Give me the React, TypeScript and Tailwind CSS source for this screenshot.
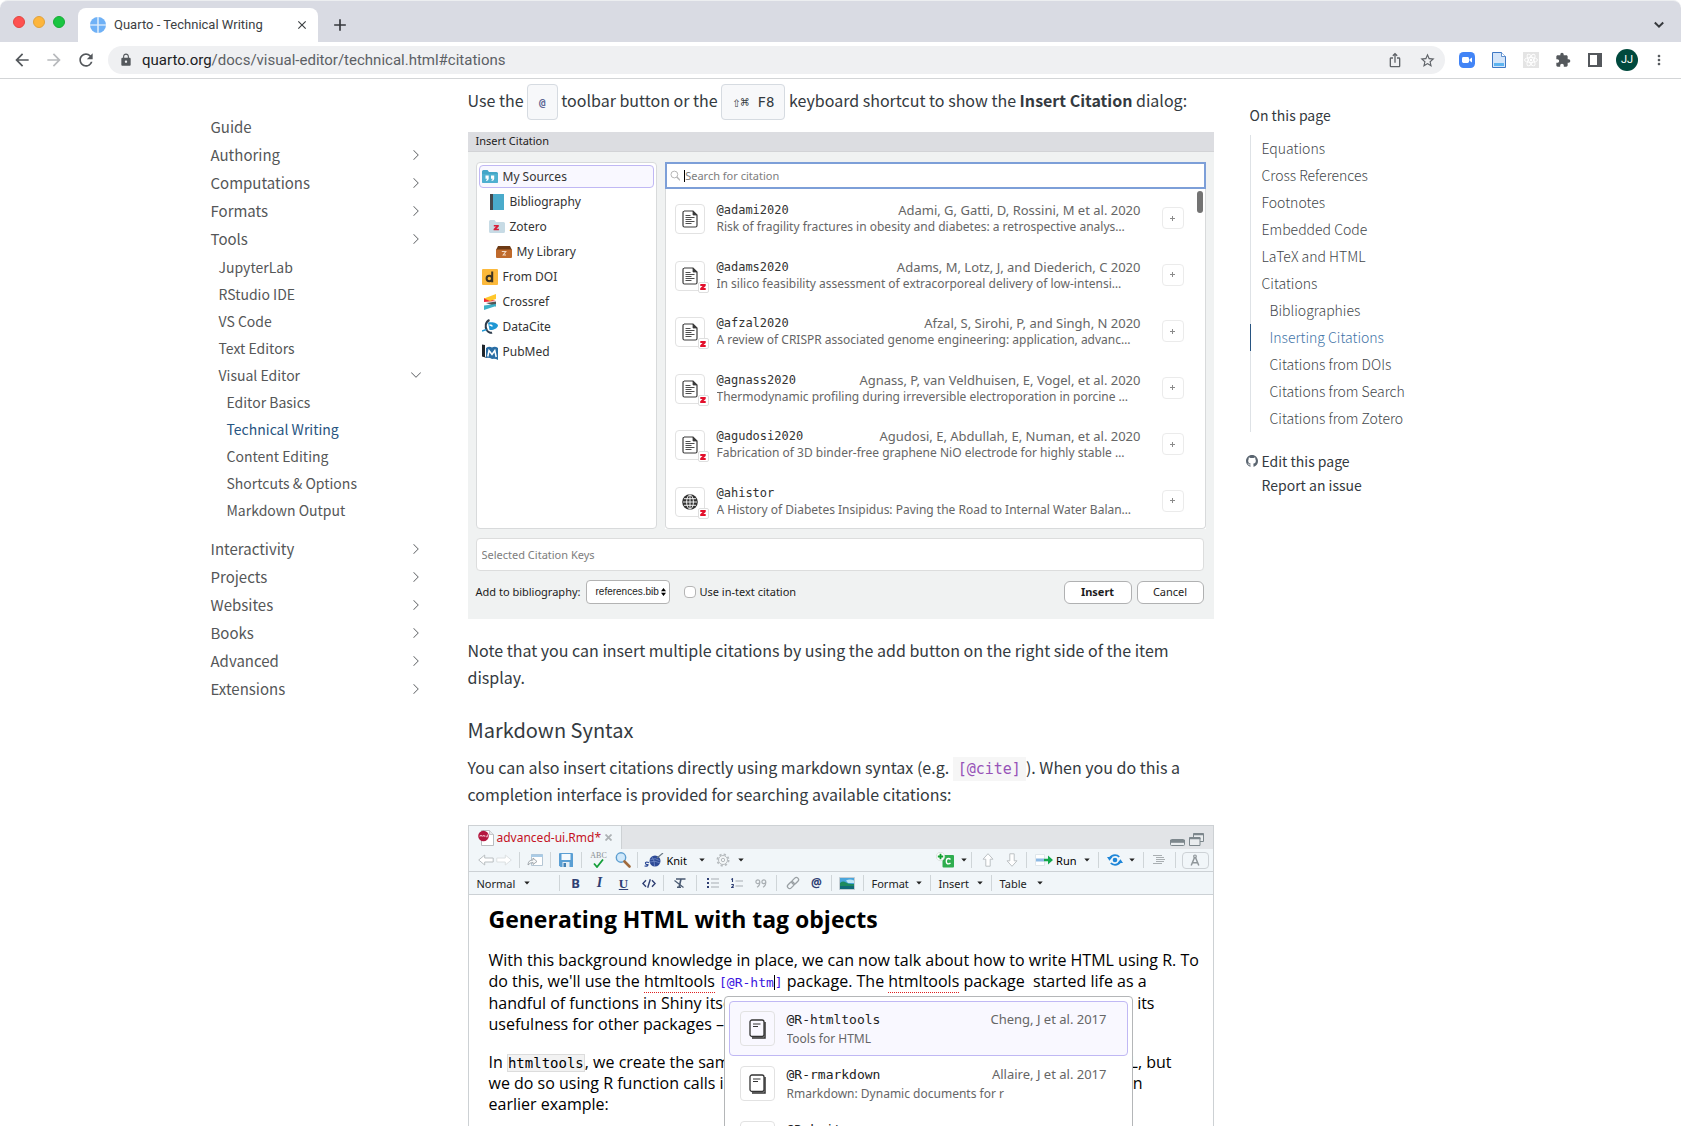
import React from "react";
import { MdArrowBack, MdArrowForward, MdRefresh, MdLock, MdIosShare, MdStarBorder, MdExtension, MdMoreVert, MdClose, MdAdd } from "react-icons/md";
import { BsChevronRight, BsChevronDown, BsGithub } from "react-icons/bs";

/* ---------- browser chrome ---------- */

function BrowserChrome() {
  return (
    <header className="shrink-0 font-['Roboto',sans-serif]">
      <div className="flex h-[42px] items-end rounded-t-lg border-t border-[#eceef0] bg-[#d9dbe3]">
        <div className="flex h-[41px] items-center gap-2 pl-[13px]">
          <button aria-label="Close window" className="size-3 rounded-full border border-[#e2463f] bg-[#fe5150]" />
          <button aria-label="Minimise window" className="size-3 rounded-full border border-[#e0a23b] bg-[#fdb53c]" />
          <button aria-label="Zoom window" className="size-3 rounded-full border border-[#17ac36] bg-[#19c541]" />
        </div>
        <div className="ml-[13px] flex h-[34px] w-[240px] items-center rounded-t-lg bg-white pl-3 pr-[9px]">
          <svg className="size-4" viewBox="0 0 16 16">
            <circle cx="8" cy="8" r="8" fill="#6fb1f6" />
            <path d="M8 0v16M0 8h16" stroke="#fff" strokeWidth="1.2" />
            <path d="M8 0v16M0 8h16" stroke="#bcdcfb" strokeWidth=".4" />
          </svg>
          <span className="ml-2 flex-1 whitespace-nowrap text-[13px] text-[#3c4043]">Quarto - Technical Writing</span>
          <button aria-label="Close tab" className="text-[#3c4043]"><MdClose className="size-[14px]" /></button>
        </div>
        <button aria-label="New tab" className="mb-[7px] ml-3 text-[#36393d]"><MdAdd className="size-5" /></button>
        <button aria-label="Search tabs" className="mb-3 ml-auto mr-[17px] text-[#36393d]">
          <svg className="h-[10px] w-[10px]" viewBox="0 0 10 10" fill="none" stroke="currentColor" strokeWidth="2"><path d="M.8 2.5 5 6.7 9.2 2.5" /></svg>
        </button>
      </div>
      <div className="flex h-[37px] items-center border-b border-[#d3d5d7] bg-white pl-3 pr-[14px] text-[#5f6368]">
        <button aria-label="Back"><MdArrowBack className="size-5 text-[#54585c]" /></button>
        <button aria-label="Forward" className="ml-3"><MdArrowForward className="size-5 text-[#b8babd]" /></button>
        <button aria-label="Reload" className="ml-3"><MdRefresh className="size-5 text-[#54585c]" /></button>
        <div className="ml-3 flex h-7 flex-1 items-center rounded-full bg-[#eff0f2] pl-[11px] pr-[9px]">
          <MdLock className="size-[14px] text-[#54585c]" />
          <span className="ml-[9px] flex-1 text-[15px] text-[#5c6065]"><span className="text-[#202124]">quarto.org</span>/docs/visual-editor/technical.html#citations</span>
          <button aria-label="Share"><MdIosShare className="size-4" /></button>
          <button aria-label="Bookmark" className="ml-4"><MdStarBorder className="size-[17px]" /></button>
        </div>
        <div className="ml-[14px] flex items-center gap-4">
          <button aria-label="Zoom">
            <svg className="size-4" viewBox="0 0 16 16"><rect width="16" height="16" rx="4.5" fill="#4284f6" /><rect x="3" y="5" width="7" height="6" rx="1.4" fill="#fff" /><path d="m10.5 7.3 2.5-1.8v5l-2.5-1.8z" fill="#fff" /></svg>
          </button>
          <button aria-label="Document">
            <svg className="size-4" viewBox="0 0 16 16"><path d="M1.500.5h9l4 4v11h-13z" fill="#d4e5f9" stroke="#3e78c4" /><path d="M10.500.5v4h4" fill="#fff" stroke="#3e78c4" strokeWidth=".8" /><path d="M3 11h10v3H3z" fill="#5db4f0" /></svg>
          </button>
          <button aria-label="React tools">
            <svg className="size-4" viewBox="0 0 16 16"><path fill="#e4e4e4" d="M0 0h16v16H0z" /><g fill="none" stroke="#fff" strokeWidth=".9"><ellipse cx="8" cy="8" rx="6.500" ry="2.500" /><ellipse cx="8" cy="8" rx="6.500" ry="2.500" transform="rotate(60 8 8)" /><ellipse cx="8" cy="8" rx="6.500" ry="2.500" transform="rotate(120 8 8)" /></g><circle cx="8" cy="8" r="1.200" fill="#fff" /></svg>
          </button>
          <button aria-label="Extensions"><MdExtension className="size-4 text-[#54585c]" /></button>
          <button aria-label="Side panel">
            <svg className="h-[14px] w-4" viewBox="0 0 16 14"><path fill="#54585c" d="M1 0h14v14H1z" /><path fill="#fff" d="M3 2h7v10H3z" /></svg>
          </button>
          <button aria-label="Profile" className="-mx-[3px] size-[22px] rounded-full bg-[#00493d] text-[11px] text-white">JJ</button>
          <button aria-label="Menu"><MdMoreVert className="size-4 text-[#54585c]" /></button>
        </div>
      </div>
    </header>
  );
}

/* ---------- left navigation ---------- */

type NavEntry = { label: string; level?: 1 | 2 | 3; mark?: "right" | "down"; active?: boolean };

const navTop: NavEntry[] = [
  { label: "Guide" },
  { label: "Authoring", mark: "right" },
  { label: "Computations", mark: "right" },
  { label: "Formats", mark: "right" },
  { label: "Tools", mark: "right" },
];
const navTools: NavEntry[] = [
  { label: "JupyterLab" },
  { label: "RStudio IDE" },
  { label: "VS Code" },
  { label: "Text Editors" },
  { label: "Visual Editor", mark: "down" },
  { label: "Editor Basics", level: 3 },
  { label: "Technical Writing", level: 3, active: true },
  { label: "Content Editing", level: 3 },
  { label: "Shortcuts & Options", level: 3 },
  { label: "Markdown Output", level: 3 },
];
const navRest: NavEntry[] = ["Interactivity", "Projects", "Websites", "Books", "Advanced", "Extensions"].map((label) => ({ label, mark: "right" }));

function NavItem({ item, sub }: { item: NavEntry; sub?: boolean }) {
  return (
    <li className={`flex items-center justify-between ${sub ? "h-[27px] text-sm" : "h-7 text-[15px]"} ${sub ? (item.level === 3 ? "pl-4" : "pl-2") : ""}`}>
      <a href="#" className={item.active ? "text-[#275481]" : "text-[#555758]"}>{item.label}</a>
      {item.mark && (
        <button aria-label={`Toggle ${item.label}`} className="text-[#5a5d60]">
          {item.mark === "right" ? <BsChevronRight className="size-3" /> : <BsChevronDown className="size-3" />}
        </button>
      )}
    </li>
  );
}

function Sidebar() {
  return (
    <nav className="pr-[46px] pt-[34px]">
      <ul>{navTop.map((i) => <NavItem key={i.label} item={i} />)}</ul>
      <ul>{navTools.map((i) => <NavItem key={i.label} item={i} sub />)}</ul>
      <ul className="mt-3">{navRest.map((i) => <NavItem key={i.label} item={i} />)}</ul>
    </nav>
  );
}

/* ---------- right table of contents ---------- */

const toc = [
  ["Equations", 1], ["Cross References", 1], ["Footnotes", 1], ["Embedded Code", 1], ["LaTeX and HTML", 1], ["Citations", 1],
  ["Bibliographies", 2], ["Inserting Citations", 2], ["Citations from DOIs", 2], ["Citations from Search", 2], ["Citations from Zotero", 2],
] as const;

function Toc() {
  return (
    <aside className="pl-9 pt-6 text-sm text-[#343a40]">
      <h2 className="leading-6">On this page</h2>
      <ul className="mt-2 font-light">
        {toc.map(([label, level]) => {
          const on = label === "Inserting Citations";
          return (
            <li key={label} className={`h-[27px] border-l leading-[27px] ${on ? "border-[#275481]" : "border-[#dee2e6]"} ${level === 2 ? "pl-[19px]" : "pl-[11px]"}`}>
              <a href="#" className={on ? "text-[#3f74a8]" : "text-[#43474b]"}>{label}</a>
            </li>
          );
        })}
      </ul>
      <ul className="-ml-1 mt-[17px] leading-6">
        <li className="flex items-center gap-1"><BsGithub className="size-3 text-[#5a6570]" /><a href="#">Edit this page</a></li>
        <li className="pl-4"><a href="#">Report an issue</a></li>
      </ul>
    </aside>
  );
}

/* ---------- insert citation dialog ---------- */

const ic = "size-4 shrink-0";

const FolderQuotes = () => (
  <svg className={ic} viewBox="0 0 16 16"><path d="M0 2.500Q0 1 1.500 1h4L7 3h7.500Q16 3 16 4.500v8q0 1.500-1.500 1.500h-13Q0 14 0 12.500z" fill="#43a6c8" /><path d="M0 5h16v7.500q0 1.500-1.500 1.500h-13Q0 14 0 12.500z" fill="#4fb0d0" /><path d="M3.500 6.500h3.200v3.300q0 1.700-2.400 2.200l-.3-.9q1.200-.5 1.200-1.400H3.500zM9 6.500h3.200v3.300q0 1.700-2.400 2.200l-.3-.9q1.200-.5 1.200-1.400H9z" fill="#fff" /></svg>
);
const Book = () => <svg className={ic} viewBox="0 0 16 16"><path d="M1 0h4v16H1z" fill="#44484c" /><path d="M4 0h11v16H4z" fill="#4aabcb" /></svg>;
const ZoteroFolder = () => (
  <svg className={ic} viewBox="0 0 16 16"><path d="M0 2.500Q0 1 1.500 1h4L7 3h7.500Q16 3 16 4.500v8q0 1.500-1.500 1.500h-13Q0 14 0 12.500z" fill="#c7dbe5" /><path d="M4.800 6h5v1.400L7.500 9.800h2.400v1.500h-5.300V9.900L7 7.500H4.800z" fill="#d8203a" /></svg>
);
const Drawer = () => (
  <svg className={ic} viewBox="0 0 16 16"><path d="M2 2h12l2 4H0z" fill="#6d3a14" /><path d="M0 5.500h16V13q0 1-1 1H1q-1 0-1-1z" fill="#bf6a2c" /><path d="M5.800 7.500h4L7.200 11h2.800" fill="none" stroke="#f2d8c2" strokeWidth="1.100" /></svg>
);
const Doi = () => (
  <svg className={ic} viewBox="0 0 16 16"><rect width="16" height="16" rx="1" fill="#fcb93b" /><circle cx="7.300" cy="9.500" r="2.700" fill="none" stroke="#3d3424" strokeWidth="2" /><path d="M10.200 2.500v10.800" stroke="#3d3424" strokeWidth="2" /></svg>
);
const Crossref = () => (
  <svg className={ic} viewBox="0 0 16 16"><path d="M2 4v4l12-1z" fill="#ee2d3b" /><path d="M2 4.500 14 0v5L8 7z" fill="#ffc72c" /><path d="m4 9 10-1.500v5z" fill="#4f5858" /><path d="M2 11.500 14 10v2L2 16z" fill="#3eb1c8" /></svg>
);
const DataCite = () => (
  <svg className={ic} viewBox="0 0 16 16"><path d="M6 3.500c5-1 9.500.5 10 3-.5 3-5 5-8.500 4.500z" fill="#1f97d4" /><path d="M7.500 6q2.500 0 2.500 1.500" stroke="#fff" strokeWidth="1.500" fill="none" /><path d="M7.500 1C3.500 2.500 2.500 8 5 11.500c1.500 2 4 2.500 5 2" fill="none" stroke="#2d3c4c" strokeWidth="2" /><path d="m0 12 4.500-1.500" stroke="#1f97d4" strokeWidth="1.500" /></svg>
);
const PubMed = () => (
  <svg className={ic} viewBox="0 0 16 16"><path d="M0 .5 3 1v11.500l2 1.500-5-1.500z" fill="#20252b" /><path d="M4 4q3-2 6-.5Q13 2 16 4v12q-3-2-6-1-3-2-6-1z" fill="#2a6ea5" /><path d="m5.800 12.500 1.200-6 3 4 2.800-4 1.400 6.500" fill="none" stroke="#fff" strokeWidth="1.500" /></svg>
);

const sources = [
  { label: "My Sources", icon: FolderQuotes, pad: "pl-[2px]", on: true },
  { label: "Bibliography", icon: Book, pad: "pl-[9px]" },
  { label: "Zotero", icon: ZoteroFolder, pad: "pl-[9px]" },
  { label: "My Library", icon: Drawer, pad: "pl-4" },
  { label: "From DOI", icon: Doi, pad: "pl-[2px]" },
  { label: "Crossref", icon: Crossref, pad: "pl-[2px]" },
  { label: "DataCite", icon: DataCite, pad: "pl-[2px]" },
  { label: "PubMed", icon: PubMed, pad: "pl-[2px]" },
];

const citations = [
  { key: "@adami2020", who: "Adami, G, Gatti, D, Rossini, M et al. 2020", what: "Risk of fragility fractures in obesity and diabetes: a retrospective analys…", kind: "doc", z: false },
  { key: "@adams2020", who: "Adams, M, Lotz, J, and Diederich, C 2020", what: "In silico feasibility assessment of extracorporeal delivery of low-intensi…", kind: "doc", z: true },
  { key: "@afzal2020", who: "Afzal, S, Sirohi, P, and Singh, N 2020", what: "A review of CRISPR associated genome engineering: application, advanc…", kind: "doc", z: true },
  { key: "@agnass2020", who: "Agnass, P, van Veldhuisen, E, Vogel, et al. 2020", what: "Thermodynamic profiling during irreversible electroporation in porcine …", kind: "doc", z: true },
  { key: "@agudosi2020", who: "Agudosi, E, Abdullah, E, Numan, et al. 2020", what: "Fabrication of 3D binder-free graphene NiO electrode for highly stable …", kind: "doc", z: true },
  { key: "@ahistor", who: "", what: "A History of Diabetes Insipidus: Paving the Road to Internal Water Balan…", kind: "web", z: true },
];

const DocIcon = () => (
  <svg className="h-[18px] w-4" viewBox="0 0 16 18" fill="none" stroke="#3b3b3b"><path d="M2 1h9l4 4v10.500q0 1.500-1.500 1.500H2.500Q1 17 1 15.500v-13Q1 1 2.500 1z" strokeWidth="1.200" /><path d="M11 1v4h4z" fill="#3b3b3b" strokeWidth=".8" /><path d="M3.500 5.500h5M3.500 7.500h9M3.500 9.500h6M3.500 11.500h9M3.500 13.500h6" strokeWidth=".9" /></svg>
);
const WebIcon = () => (
  <svg className="size-4" viewBox="0 0 16 16" fill="none" stroke="#fff"><circle cx="8" cy="8" r="7.800" fill="#333" stroke="none" /><ellipse cx="8" cy="8" rx="3.400" ry="7" strokeWidth=".9" /><path d="M8 1v14M1 8h14M2 4.700h12M2 11.300h12" strokeWidth=".9" /></svg>
);

function InsertCitationDialog() {
  return (
    <section aria-label="Insert Citation" className="mt-[18px] bg-[#f0f2f2] font-['Noto_Sans',sans-serif] text-[11px] text-[#1c1c1c]">
      <h2 className="h-5 border-b border-[#d2d3d6] bg-[#dcdde1] pl-2 leading-[18px]">Insert Citation</h2>
      <div className="grid grid-cols-[181px_minmax(0,1fr)] gap-2 px-2 pt-[10px]">
        <ul className="flex flex-col gap-[2px] rounded-sm border border-[#d8dadb] bg-white p-[2px] text-xs text-[#333]">
          {sources.map(({ label, icon: Icon, pad, on }) => (
            <li key={label}>
              <button className={`flex h-[23px] w-full items-center gap-[5px] rounded-sm border ${on ? "border-[#c0b8f4] bg-[#f9f8ff]" : "border-transparent"} ${pad}`}>
                <Icon />
                {label}
              </button>
            </li>
          ))}
        </ul>
        <div className="bg-white">
          <label className="flex h-[27px] items-center border-2 border-[#7d9fd8] pl-[3px]">
            <svg className="size-[11px]" viewBox="0 0 11 11" fill="none" stroke="#b4b4b4"><circle cx="4.500" cy="4.500" r="3.500" /><path d="m7 7 3.500 3.500" strokeWidth="1.500" /></svg>
            <span className="ml-1 h-3 w-px bg-black" />
            <input aria-label="Search for citation" placeholder="Search for citation" className="w-full bg-transparent outline-none placeholder:text-[#7d7d7d]" />
          </label>
          <div className="relative grid h-[340px] auto-rows-fr rounded-b-sm border border-t-0 border-[#d8dadb]">
            <span className="absolute right-[2px] top-[2px] h-[22px] w-[6px] rounded-full bg-[#737373]" />
            {citations.map((c) => (
              <div key={c.key} className="flex items-start pl-[9px] pr-[21px] pt-[13px]">
                <span className="relative mt-[2px] grid size-[30px] shrink-0 place-items-center rounded-sm border border-[#e2e2e2]">
                  {c.kind === "doc" ? <DocIcon /> : <WebIcon />}
                  {c.z && (
                    <span className="absolute -bottom-[3px] -right-[5px] grid size-[11px] place-items-center rounded-[2px] border border-[#dedede] bg-white">
                      <svg className="size-[6px]" viewBox="0 0 6 6"><path d="M.3 0h5.400v2L3.500 4h2.200v2H.2V4.200L2.500 2H.3z" fill="#e3102c" /></svg>
                    </span>
                  )}
                </span>
                <div className="ml-3 min-w-0 flex-1 leading-[17px] text-[#666]">
                  <div className="flex justify-between">
                    <span className="font-['DejaVu_Sans_Mono',monospace] text-xs leading-[17px] text-[#333]">{c.key}</span>
                    <span className="text-[13px] leading-[17px]">{c.who}</span>
                  </div>
                  <p className="truncate text-xs leading-4">{c.what}</p>
                </div>
                <button aria-label={`Add ${c.key}`} className="ml-[21px] mt-[5px] grid size-[22px] shrink-0 place-items-center rounded-sm border border-[#ebebeb]">
                  <svg className="size-[5px]" viewBox="0 0 5 5" stroke="#8a8a8a"><path d="M2.500 0v5M0 2.500h5" /></svg>
                </button>
              </div>
            ))}
          </div>
        </div>
      </div>
      <div className="pb-[15px] pl-2 pr-[10px]">
        <input aria-label="Selected Citation Keys" placeholder="Selected Citation Keys" className="mt-[9px] block h-[33px] w-full rounded-sm border border-[#dcdddd] bg-white px-[5px] outline-none placeholder:text-[#7d7d7d]" />
        <div className="mt-[9px] flex items-center leading-4">
          <label htmlFor="bib">Add to bibliography:</label>
          <span className="relative ml-[6px] flex">
            <select id="bib" className="h-6 w-[84px] appearance-none rounded border border-[#b3b3b3] bg-white pl-2 font-['Liberation_Sans',sans-serif] text-[10px]"><option>references.bib</option></select>
            <svg className="pointer-events-none absolute right-1 top-2 h-2 w-[5px]" viewBox="0 0 5 8"><path d="M2.500 0 5 3.200H0zM2.500 8 5 4.800H0z" /></svg>
          </span>
          <input id="intext" type="checkbox" className="ml-[14px] size-3 appearance-none rounded-sm border border-[#b5b5b5] bg-white" />
          <label htmlFor="intext" className="ml-[3px]">Use in-text citation</label>
          <button className="ml-auto h-[23px] w-[68px] rounded-md border border-[#b0b1b2] bg-white font-bold">Insert</button>
          <button className="ml-[5px] h-[23px] w-[67px] rounded-md border border-[#b0b1b2] bg-white">Cancel</button>
        </div>
      </div>
    </section>
  );
}

/* ---------- editor figure ---------- */

const Sep = ({ className = "mx-[7px]" }: { className?: string }) => <span className={`h-4 w-px shrink-0 bg-[#cfd5d8] ${className}`} />;
const Caret = ({ className = "" }: { className?: string }) => <svg className={`h-1 w-[6px] shrink-0 ${className}`} viewBox="0 0 6 4"><path d="M.3.5h5.400L3 3.500z" fill="#222" /></svg>;

function EditorToolbar() {
  return (
    <div className="flex h-[23px] items-center border-b border-[#ccd1d5] bg-[#f1f6f9] pl-[9px] pr-1">
      <button aria-label="Back"><svg className="h-3 w-4" viewBox="0 0 16 12" fill="#fff" stroke="#b9bec1"><path d="m.7 6 6-5v3h8.500v4H6.700v3z" /></svg></button>
      <button aria-label="Forward" className="ml-[2px]"><svg className="h-3 w-4" viewBox="0 0 16 12" fill="#fff" stroke="#dce0e2"><path d="m15.300 6-6-5v3H.8v4h8.500v3z" /></svg></button>
      <Sep />
      <button aria-label="Show in new window"><svg className="h-3 w-4" viewBox="0 0 16 12"><path d="M4.500.5h11v11h-11z" fill="#fff" stroke="#b5c6d4" /><path d="M4 .5h12V3H4z" fill="#a9cbe6" /><path d="M1 11q0-5 5-5V4l4 3.500-4 3V8.500Q3 8.500 1 11z" fill="#f5f7f8" stroke="#8f979d" strokeWidth=".8" /></svg></button>
      <Sep className="ml-[7px] mr-2" />
      <button aria-label="Save"><svg className="size-[14px]" viewBox="0 0 14 14"><path d="M1 0h12q1 0 1 1v13H1.500L0 12.500V1q0-1 1-1z" fill="#5a9fd4" /><path d="M2.500 1h9v6h-9z" fill="#f4fafe" /><path d="M3.500 9h7v5h-7z" fill="#e6eef4" /><path d="M4.500 10H7v4H4.500z" fill="#417fb2" /></svg></button>
      <Sep className="mx-2" />
      <button aria-label="Check spelling" className="flex w-[18px] flex-col items-center font-['Liberation_Serif',serif] text-[8px] leading-[7px] text-[#8b9093]">
        ABC
        <svg className="h-[9px] w-[11px]" viewBox="0 0 11 9" fill="none" stroke="#15a03a" strokeWidth="1.800"><path d="M1 4.500 4 8l6-7.500" /></svg>
      </button>
      <button aria-label="Find" className="ml-[7px]"><svg className="size-4" viewBox="0 0 16 16"><circle cx="6" cy="5.500" r="4.700" fill="#cfe8fa" stroke="#5f9fd0" strokeWidth="1.400" /><path d="m9.500 9.500 5 5" stroke="#a06a3c" strokeWidth="2.600" strokeLinecap="round" /></svg></button>
      <Sep className="mx-[6px]" />
      <button className="flex items-center gap-[3px]">
        <svg className="h-[14px] w-5" viewBox="0 0 20 14"><circle cx="11" cy="8" r="5.500" fill="#2d4a96" /><path d="M6.500 6.500q5-2 9 1M6 9q5-2 10 1M8 4q3 4 2.500 9" stroke="#7d95d0" strokeWidth=".7" fill="none" /><path d="m13 5 6-5" stroke="#6b7a86" strokeWidth="1.200" /><path d="M5 9.500q-4-1-3.500.8T4 11.500Q4.500 13.500.5 13" stroke="#2d4a96" strokeWidth="1.100" fill="none" /></svg>
        Knit
      </button>
      <button aria-label="Knit options" className="ml-3 flex"><Caret /></button>
      <button aria-label="Settings" className="ml-[11px] flex items-center gap-2">
        <svg className="size-[14px]" viewBox="0 0 14 14" fill="none" stroke="#b6bbbe"><circle cx="7" cy="7" r="5.600" strokeWidth="1.800" strokeDasharray="2.200 2.200" /><circle cx="7" cy="7" r="4.500" fill="#f4f7f8" /><circle cx="7" cy="7" r="1.700" /></svg>
        <Caret />
      </button>
      <button aria-label="Insert chunk" className="ml-auto flex items-center gap-[7px]">
        <svg className="h-4 w-[18px]" viewBox="0 0 18 16"><rect x="6.500" y="3" width="11.500" height="12.500" rx="1" fill="#2fae4f" /><path d="M14.500 7.500q-.8-1-2-1-2.200 0-2.200 2.700t2.200 2.700q1.200 0 2-1" stroke="#fff" strokeWidth="1.300" fill="none" /><circle cx="4.500" cy="4.500" r="4.200" fill="#fff" stroke="#c8d2cc" strokeWidth=".6" /><path d="M4.500 1.800v5.400M1.800 4.500h5.400" stroke="#12a030" strokeWidth="1.800" /></svg>
        <Caret />
      </button>
      <Sep className="ml-1 mr-[10px]" />
      <button aria-label="Previous chunk"><svg className="h-[14px] w-3" viewBox="0 0 12 14" fill="#fff" stroke="#bcc1c4"><path d="m6 .7 5 5.500H8.200v7H3.800v-7H1z" /></svg></button>
      <button aria-label="Next chunk" className="ml-3"><svg className="h-[14px] w-3" viewBox="0 0 12 14" fill="#fff" stroke="#bcc1c4"><path d="m6 13.300 5-5.500H8.200v-7H3.800v7H1z" /></svg></button>
      <Sep className="mx-2" />
      <button className="flex items-center gap-[3px]">
        <svg className="h-3 w-[18px]" viewBox="0 0 18 12"><path d="M.5.5h9v11h-9z" fill="#fff" stroke="#dfe6ea" /><path d="M1 4.500h8v3H1z" fill="#8cb9e4" /><path d="M9 4.800h4V1.500L18 6l-5 4.500V7.200H9z" fill="#12a84a" /></svg>
        Run
      </button>
      <button aria-label="Run options" className="ml-[7px] flex"><Caret /></button>
      <Sep className="mx-2" />
      <button aria-label="Publish" className="flex items-center gap-[6px]">
        <svg className="h-3 w-4" viewBox="0 0 16 12"><circle cx="8" cy="6" r="2.300" fill="#1e86d8" /><path d="M2.500 4.500Q4.500 1.200 8 1.200q2.800 0 4.200 1.800M13.500 7.500q-2 3.300-5.500 3.300-2.800 0-4.200-1.800" fill="none" stroke="#1e86d8" strokeWidth="1.800" /><path d="M0 3h5.500L2.500 6.800zM16 9h-5.500l3-3.800z" fill="#1e86d8" /></svg>
        <Caret />
      </button>
      <Sep className="ml-2 mr-[9px]" />
      <button aria-label="Outline"><svg className="h-[10px] w-3" viewBox="0 0 12 10" stroke="#a9afb2"><path d="M0 .5h9M3 2.500h8M3 4.500h9M3 6.500h8M0 8.500h9" /></svg></button>
      <Sep className="ml-[10px] mr-[6px]" />
      <button aria-label="Visual mode" className="grid h-[17px] w-[27px] place-items-center rounded-sm border border-[#cdd2d6]">
        <svg className="h-3 w-[10px]" viewBox="0 0 10 12" fill="none" stroke="#8f969a"><circle cx="5" cy="2.300" r="1.300" strokeWidth="1.200" /><path d="M4.500 3.500 1.200 11.500M5.500 3.500l3.300 8M2.200 8.200q2.800 1.300 5.600 0" strokeWidth="1.500" /></svg>
      </button>
    </div>
  );
}

function FormatToolbar() {
  return (
    <div className="flex h-[23px] items-center border-b border-[#ccd1d5] bg-[#f1f6f9] pl-2 text-[#222]">
      <button className="flex w-[53px] items-center justify-between">Normal<Caret /></button>
      <Sep className="ml-[29px] mr-[10px]" />
      <button className="w-3 text-[13px] font-bold text-[#2f3f73]">B</button>
      <button className="ml-3 w-3 font-['Liberation_Serif',serif] text-sm font-bold italic text-[#2f3f73]">I</button>
      <button className="ml-3 w-3 font-['Liberation_Serif',serif] text-[13px] font-bold text-[#2f3f73] underline">U</button>
      <button aria-label="Code" className="ml-3"><svg className="h-[9px] w-[14px]" viewBox="0 0 14 9" fill="none" stroke="#2f3f73" strokeWidth="1.400"><path d="M4 1.200.9 4.500 4 7.800M10 1.200l3.100 3.300L10 7.800M8.300.3 5.700 8.700" /></svg></button>
      <Sep />
      <button aria-label="Clear formatting" className="ml-[3px]"><svg className="h-[10px] w-3" viewBox="0 0 12 10" fill="none" stroke="#4a5a72"><path d="M2 1h9.500M7 1 5 9.500M3 9.300h4" strokeWidth="1.600" /><path d="m.5 2.500 9 7" strokeWidth="1.200" /></svg></button>
      <Sep className="mx-[10px]" />
      <button aria-label="Bulleted list"><svg className="h-[10px] w-3" viewBox="0 0 12 10"><path d="M0 0h2v2H0zM0 4h2v2H0zM0 8h2v2H0z" fill="#2f3f73" /><path d="M4 1h8M4 5h8M4 9h8" stroke="#a7adb3" /></svg></button>
      <button aria-label="Numbered list" className="ml-3"><svg className="h-[10px] w-3" viewBox="0 0 12 10"><path d="M.3 1.500 1.500.7V4M.3 6.500h2V8L.5 9.500h2.200" fill="none" stroke="#2f3f73" strokeWidth="1.100" /><path d="M4.500 3h7.500M4.500 8h7.500" stroke="#a7adb3" /></svg></button>
      <button aria-label="Blockquote" className="ml-3"><svg className="h-[9px] w-3" viewBox="0 0 12 9" fill="none" stroke="#aab0b4" strokeWidth="1.200"><circle cx="2.800" cy="2.800" r="1.900" /><path d="M4.700 2.800q.3 4-2.700 5.500" /><circle cx="8.800" cy="2.800" r="1.900" /><path d="M10.700 2.800q.3 4-2.700 5.500" /></svg></button>
      <Sep className="mx-[9px]" />
      <button aria-label="Link"><svg className="size-[14px]" viewBox="0 0 14 14" fill="none" stroke="#9aa0a4" strokeWidth="1.300"><rect x="-3.800" y="-2.200" width="7.600" height="4.400" rx="2.200" transform="translate(4.800 9.200) rotate(-45)" /><rect x="-3.800" y="-2.200" width="7.600" height="4.400" rx="2.200" transform="translate(9.200 4.800) rotate(-45)" /></svg></button>
      <button className="ml-[10px] w-[14px] text-xs font-bold text-[#2f3f73]">@</button>
      <Sep />
      <button aria-label="Image"><svg className="h-[13px] w-4" viewBox="0 0 16 13"><path d="M.5.5h15v12H.5z" fill="#4aa6dc" stroke="#c3ccd2" /><path d="M1 7h14v5H1z" fill="#116a78" /><path d="M1 6q3-2.500 6-.5t8 1.500v2H1z" fill="#1e8a5f" /><path d="M7 3.500q4-2 8 0V6H9z" fill="#bfe6f6" /></svg></button>
      <Sep className="mx-2" />
      <button className="flex w-[50px] items-center justify-between">Format<Caret /></button>
      <Sep className="mx-2" />
      <button className="flex w-11 items-center justify-between">Insert<Caret /></button>
      <Sep className="mx-2" />
      <button className="flex w-[43px] items-center justify-between">Table<Caret /></button>
    </div>
  );
}

const suggestions = [
  { key: "@R-htmltools", title: "Tools for HTML", who: "Cheng, J et al. 2017", on: true },
  { key: "@R-rmarkdown", title: "Rmarkdown: Dynamic documents for r", who: "Allaire, J et al. 2017" },
  { key: "@R-knitr", title: "", who: "" },
];

function CompletionPopup() {
  return (
    <ul className="absolute left-[255px] top-[101px] w-[409px] rounded-t border border-[#b4b6b8] bg-white p-1 font-['Noto_Sans',sans-serif]">
      {suggestions.map((s) => (
        <li key={s.key} className={`flex h-[55px] items-center rounded-sm border pl-[10px] pr-5 ${s.on ? "border-[#c0b8f4] bg-[#f9f8ff]" : "border-transparent"}`}>
          <span className="grid size-[35px] shrink-0 place-items-center rounded-sm border border-[#e2e2e2]">
            <svg className="h-5 w-[17px]" viewBox="0 0 17 20" fill="none" stroke="#333"><rect x="1" y="1" width="14" height="16.500" rx="2" strokeWidth="1.300" /><path d="M16 3v16H3" strokeWidth="1.500" /><path d="M4 5h7.500M4 7.500h5" /></svg>
          </span>
          <div className="ml-3 min-w-0 flex-1">
            <div className="flex justify-between leading-[19px]">
              <span className="font-['DejaVu_Sans_Mono',monospace] text-[13px] text-[#222]">{s.key}</span>
              <span className="text-[13px] text-[#666]">{s.who}</span>
            </div>
            <p className="h-[19px] truncate text-xs leading-[19px] text-[#666]">{s.title}</p>
          </div>
        </li>
      ))}
    </ul>
  );
}

const spell = "border-b border-dotted border-[#e02020]";

function EditorFigure() {
  return (
    <section aria-label="Editor" className="mt-[17px] border border-[#cdd1d4] bg-white font-['Noto_Sans',sans-serif] text-[11px] text-black">
      <div className="flex h-[23px] items-stretch bg-[#e2e4e7]">
        <div className="flex w-[153px] items-center border-r border-[#cdd1d4] bg-[#f1f6f9] pl-[9px] text-[#c4121f]">
          <svg className="size-4" viewBox="0 0 16 16"><path d="M3.500.5h8l4 4v11h-12z" fill="#fff" stroke="#b9bdc0" /><path d="M11.500.5v4h4" fill="#e6e8ea" stroke="#b9bdc0" strokeWidth=".8" /><circle cx="5.500" cy="6" r="5.300" fill="#b3173f" /><path d="M2 6.800V5.500h2v1.300M5 6.800V5.500h1.500v1.300M8 5.500v1.300h1.500V4.500" stroke="#f3c6d2" strokeWidth=".8" fill="none" /></svg>
          <span className="ml-[3px] text-xs">advanced-ui.Rmd*</span>
          <button aria-label="Close file" className="ml-1"><svg className="size-[7px]" viewBox="0 0 7 7" stroke="#adb2b5" strokeWidth="1.800"><path d="m.5.5 6 6M6.500.5l-6 6" /></svg></button>
        </div>
        <div className="ml-auto flex items-end gap-1 pb-[3px] pr-[9px]">
          <button aria-label="Minimise pane"><svg className="h-[7px] w-[15px]" viewBox="0 0 15 7"><rect x=".5" y=".5" width="14" height="6" rx="1" fill="#e9ecee" stroke="#7d878c" /><path d="M0 1h15v2.800H0z" fill="#7d878c" /></svg></button>
          <button aria-label="Maximise pane"><svg className="h-[13px] w-[15px]" viewBox="0 0 15 13" fill="#e9ecee" stroke="#7d878c"><path d="M4.500.5h10v8h-10z" /><path d="M4 1.500h11" strokeWidth="1.500" /><path d="M.5 4.500h10.500v8H.5z" /><path d="M0 5.500h11.500" strokeWidth="1.500" /></svg></button>
        </div>
      </div>
      <EditorToolbar />
      <FormatToolbar />
      <div className="relative px-5 pb-10 pt-[9px] font-['Open_Sans',sans-serif] text-base leading-[21px]">
        <h2 className="text-[23px] font-bold leading-[30px]">Generating HTML with tag objects</h2>
        <div className="mt-4 whitespace-nowrap">
          <p>With this background knowledge in place, we can now talk about how to write HTML using R. To</p>
          <p>do this, we'll use the <span className={spell}>htmltools</span> <span className="font-['DejaVu_Sans_Mono',monospace] text-[13px] text-[#3a16e0]">[@R-htm<span className="border-l border-black">]</span></span> package. The <span className={spell}>htmltools</span> package&nbsp; started life as a</p>
          <p className="flex justify-between pr-[38px]"><span>handful of functions in Shiny itself</span><span>its</span></p>
          <p>usefulness for other packages –</p>
        </div>
        <div className="mt-[17px] whitespace-nowrap">
          <p className="flex justify-between pr-[21px]"><span>In <code className="border border-[#dcdcdc] bg-[#f2f2f2] font-['DejaVu_Sans_Mono',monospace] text-sm leading-none">htmltools</code>, we create the same</span><span>HTML, but</span></p>
          <p className="flex justify-between pr-[50px]"><span>we do so using R function calls in</span><span>an</span></p>
          <p>earlier example:</p>
        </div>
        <CompletionPopup />
      </div>
    </section>
  );
}

/* ---------- page ---------- */

const kbd = "rounded border border-[#d6dbe1] bg-[#f7f8fa] py-[9px] font-['DejaVu_Sans_Mono',monospace] text-sm";

export default function App() {
  return (
    <div className="flex h-screen flex-col overflow-hidden bg-white">
      <BrowserChrome />
      <div className="min-h-0 flex-1 overflow-hidden font-['Noto_Sans_CJK_SC',sans-serif]">
        <div className="mx-auto grid max-w-[1260px] grid-cols-[257px_minmax(0,1fr)_257px]">
          <Sidebar />
          <main className="pt-2 text-base leading-[27px] text-[#343a40]">
            <p>
              Use the <kbd className={`${kbd} px-[11px]`}><span className="align-[1px] text-[11px] font-bold text-[#5a6492]">@</span></kbd> toolbar button or the{" "}
              <kbd className={`${kbd} px-[10px]`}>⇧⌘ F8</kbd> keyboard shortcut to show the <strong>Insert Citation</strong> dialog:
            </p>
            <InsertCitationDialog />
            <p className="mt-[18px]">Note that you can insert multiple citations by using the add button on the right side of the item display.</p>
            <h3 className="mt-6 text-xl leading-[30px]">Markdown Syntax</h3>
            <p className="mt-[9px]">
              You can also insert citations directly using markdown syntax (e.g. <code className="bg-[#f6f6f6] px-[5px] py-[3px] font-['DejaVu_Sans_Mono',monospace] text-[15px] leading-none text-[#9753b8]">[@cite]</code>). When you do this a completion interface is provided for searching available citations:
            </p>
            <EditorFigure />
          </main>
          <Toc />
        </div>
      </div>
    </div>
  );
}
